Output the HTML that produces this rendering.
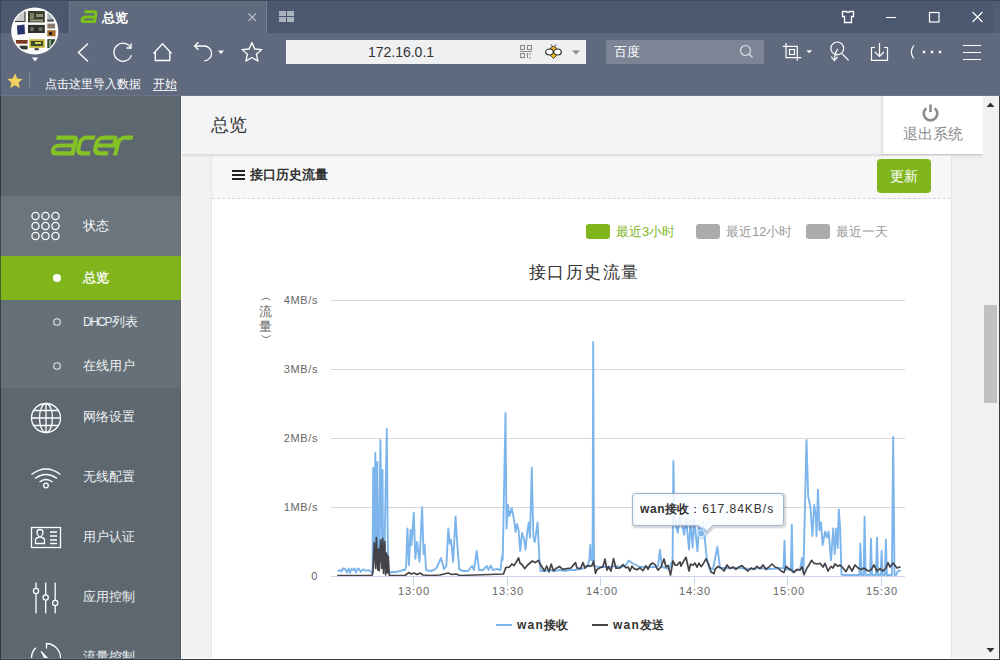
<!DOCTYPE html>
<html><head><meta charset="utf-8">
<style>
*{margin:0;padding:0;box-sizing:border-box}
html,body{width:1000px;height:660px;overflow:hidden;font-family:"Liberation Sans",sans-serif;background:#f2f3f5;position:relative}
.abs{position:absolute}
svg{position:absolute;overflow:visible}
#tabbar{left:0;top:0;width:1000px;height:33px;background:#4c5870;border-top:1px solid #3e4859}
#tab{left:69px;top:1px;width:197px;height:32px;background:#5f6a7e;border-left:1px solid #6e7a8c}
#toolbar{left:0;top:33px;width:1000px;height:62px;background:#5f6a7e}
#addr{left:286px;top:40px;width:300px;height:24px;background:#eef0f2}
#search{left:606px;top:40px;width:158px;height:24px;background:#7b8595}
#bmsep{left:29px;top:73px;width:1px;height:16px;background:#7d8797}
#pagetop{left:0;top:95px;width:1000px;height:1px;background:#6b7587}
#side{left:0;top:96px;width:181px;height:564px;background:#5c6770;border-left:1px solid #525c66}
.mi{position:absolute;left:0;width:181px;color:#eef0f2;font-size:14px}
.sb5{font-weight:500}
.tx{position:absolute;white-space:nowrap}
#main{left:181px;top:96px;width:804px;height:564px;background:#f2f2f2}
#hdr{left:182px;top:96px;width:801px;height:59px;background:#f3f4f6;border-bottom:1px solid #dcdee1}
#logout{left:882px;top:96px;width:101px;height:58px;background:#fff;box-shadow:0 2px 4px rgba(0,0,0,.12);border-left:1px solid #dcdcdc}
#panel{left:211px;top:156px;width:741px;height:504px;background:#fff;border-left:1px solid #e5e5e5;border-right:1px solid #e5e5e5}
#phdr{left:212px;top:156px;width:739px;height:43px;background:#f7f7f7;border-bottom:1px dashed #d8d8d8}
#btn{left:877px;top:159px;width:54px;height:34px;background:#80b51c;border-radius:4px;color:#fff;font-size:14px;font-weight:500;text-align:center;line-height:34px}
#sb{left:983px;top:96px;width:16px;height:564px;background:#f1f1f1}
#rb{left:999px;top:96px;width:1px;height:564px;background:#363e4a}
#thumb{left:984px;top:305px;width:13px;height:98px;background:#c1c1c1}
#botb{left:0;top:659px;width:1000px;height:1px;background:#363e4a}
</style></head><body>
<div id="tabbar" class="abs"></div>
<div class="abs" style="left:993px;top:1px;width:7px;height:95px;background:rgba(255,255,255,0.03)"></div>
<div id="tab" class="abs"></div>
<div id="toolbar" class="abs"></div>
<div id="addr" class="abs"></div>
<div id="search" class="abs"></div>
<div id="bmsep" class="abs"></div>
<div id="pagetop" class="abs"></div>
<div class="abs" style="left:0;top:0;width:1px;height:96px;background:rgba(40,55,90,0.45)"></div>

<!-- avatar -->
<svg style="left:0;top:0" width="70" height="70" viewBox="0 0 70 70">
  <defs><clipPath id="avc"><circle cx="34.8" cy="31" r="22.3"/></clipPath></defs>
  <circle cx="34.8" cy="31" r="23.6" fill="#fff"/>
  <g clip-path="url(#avc)">
    <rect x="10" y="7" width="50" height="48" fill="#fbfbfb"/>
    <rect x="14.5" y="11.4" width="11" height="10.2" fill="#c9cbcc"/>
    <path d="M25 11.5V21.5H14.5" stroke="#333" stroke-width="1" fill="none"/>
    <rect x="28" y="11" width="16.8" height="11.4" fill="#3a4030"/>
    <rect x="30" y="13" width="4" height="6" fill="#7a8060"/>
    <rect x="36" y="14" width="7" height="3" fill="#8a9070"/>
    <rect x="30" y="19.5" width="13" height="2" fill="#9a9a80"/>
    <rect x="47.3" y="12.2" width="6.5" height="9.4" fill="#aeb4ba"/>
    <rect x="47.3" y="19.5" width="6.5" height="2.1" fill="#505050"/>
    <path d="M17 25.5L24.5 24.5L25 34L17.5 34.8Z" fill="#25356c"/>
    <rect x="28" y="24.9" width="16.8" height="8.1" fill="#2e2e2c"/>
    <circle cx="32" cy="29" r="2.2" fill="#6a6a64"/><circle cx="40.5" cy="29" r="2.2" fill="#6a6a64"/>
    <rect x="47.3" y="23.6" width="7.7" height="4.9" fill="#8a7a70"/>
    <rect x="47.3" y="30.2" width="8.2" height="6.1" fill="#a46a2c"/>
    <rect x="49" y="32" width="3" height="3" fill="#2a2018"/>
    <rect x="15.8" y="40" width="11.8" height="3.7" fill="#7a3a22"/>
    <rect x="19.5" y="45.7" width="8.1" height="3.7" fill="#2e3a30"/>
    <rect x="29.3" y="39.2" width="15.5" height="8.6" fill="#c8b83a"/>
    <rect x="31" y="41" width="12" height="5" fill="#3a4a30"/>
    <rect x="35" y="42" width="6" height="2" fill="#d8d050"/>
    <rect x="34.6" y="48.2" width="4.1" height="2" fill="#333"/>
    <rect x="47.3" y="39.2" width="7.7" height="9" fill="#2c4a2e"/>
    <rect x="49" y="40" width="2" height="7" fill="#8aa080"/>
  </g>
  <path d="M32 57.5h6l-3 4z" fill="#fff"/>
</svg>
<!-- tab content -->
<svg style="left:79px;top:10px" width="20" height="15" viewBox="0 0 20 15"><g transform="scale(0.64) translate(1.5,0.5) translate(0,20) skewX(-10) translate(0,-20)" fill="none" stroke="#7cc21a" stroke-width="4.6"><path d="M4 2.3H19Q22.3 2.3 22.3 6V20"/><path d="M22.3 10.3H8Q2.3 10.3 2.3 14.2Q2.3 17.7 7 17.7H22.3"/></g></svg>
<div class="tx" style="left:102px;top:10px;font-size:13px;font-weight:bold;color:#fff;line-height:15px">总览</div>
<svg style="left:248px;top:13px" width="9" height="9"><path d="M0.5 0.5L8 8M8 0.5L0.5 8" stroke="#bcc2cb" stroke-width="1.1"/></svg>
<div class="abs" style="left:266px;top:1px;width:1px;height:32px;background:#76818f"></div>
<svg style="left:279px;top:11px" width="16" height="12"><rect x="0" y="0" width="7" height="5" fill="#aab2be"/><rect x="8" y="0" width="7" height="5" fill="#aab2be"/><rect x="0" y="6" width="7" height="5" fill="#aab2be"/><rect x="8" y="6" width="7" height="5" fill="#aab2be"/></svg>
<!-- window controls -->
<svg style="left:836px;top:6px" width="150" height="24" fill="none" stroke="#fff" stroke-width="1.2">
  <path d="M6.5 5.5H10.5Q12 7 13.5 5.5H17.5V10.5H15.5V16.5H8.5V10.5H6.5Z" stroke-width="1.3"/>
  <path d="M50 11.5h10" stroke-width="1.1"/>
  <rect x="93.5" y="6.5" width="9.5" height="9.5"/>
  <path d="M136.5 6l10 10M146.5 6l-10 10" stroke-width="1.1"/>
</svg>
<!-- nav icons -->
<svg style="left:70px;top:32px" width="200" height="40" fill="none" stroke="#fff" stroke-width="1.4">
  <path d="M18 11.5L8.5 20.5L18 29.5"/>
  <path d="M61.5 23.1A9 9 0 1 1 60.8 15.8" stroke-width="1.3"/>
  <path d="M56.5 16H61V11.3" stroke-width="1.3"/>
  <path d="M83.5 21.5L92.5 11.8L101.5 21.5M85.3 19.8V28.5H99.8V19.8" stroke-width="1.3"/>
  <path d="M124.8 14H134.2A7.4 7.4 0 0 1 134.2 28.8" stroke-width="1.3"/>
  <path d="M128.4 10.2L124.6 14L128.4 17.8" stroke-width="1.3"/>
  <path d="M148 18.5h6l-3 3.5z" fill="#fff" stroke="none"/>
  <path d="M181.90 10.50L184.66 17.00L191.70 17.62L186.37 22.25L187.95 29.13L181.90 25.50L175.85 29.13L177.43 22.25L172.10 17.62L179.14 17.00Z" stroke-width="1.3" stroke-linejoin="round"/>
</svg>
<div class="tx" style="left:286px;top:43px;width:230px;text-align:center;font-size:14px;color:#333;line-height:18px">172.16.0.1</div>
<svg style="left:518px;top:44px" width="70" height="16" fill="none">
  <g stroke="#8a8a8a" stroke-width="1.1">
    <rect x="2.5" y="1.5" width="4" height="4"/><rect x="9.5" y="1.5" width="4" height="4"/><rect x="2.5" y="9.5" width="4" height="4"/>
    <path d="M2 7.5h12M9.5 9v5M12 9v2M12 13v1.5"/>
  </g>
  <g transform="translate(27,0)">
    <path d="M7.5 2.5L6 0.5M9.5 2.5L11 0.5" stroke="#2a2a2a" stroke-width="1"/>
    <ellipse cx="8.5" cy="5" rx="3" ry="2.5" fill="#f2b51e" stroke="#2a2a2a" stroke-width="0.8"/>
    <ellipse cx="4.5" cy="8" rx="3.8" ry="3" fill="#fff" stroke="#2a2a2a" stroke-width="1.2"/>
    <ellipse cx="12.5" cy="8" rx="3.8" ry="3" fill="#fff" stroke="#2a2a2a" stroke-width="1.2"/>
    <path d="M5.5 11.5l3 3 3-3-3-2.5z" fill="#f2b51e" stroke="#2a2a2a" stroke-width="0.8"/>
  </g>
  <path d="M54 6.5h8l-4 4z" fill="#888"/>
</svg>
<div class="tx" style="left:614px;top:44px;font-size:13px;color:#fff;line-height:16px">百度</div>
<svg style="left:736px;top:42px" width="20" height="20" fill="none" stroke="#d8dce2" stroke-width="1.2"><circle cx="9.5" cy="8.5" r="5"/><path d="M13 12l3.5 3.5"/></svg>
<svg style="left:775px;top:35px" width="225" height="35" fill="none" stroke="#fff" stroke-width="1.3">
  <path d="M11 8V22.6H26.3M7.8 11.4H22.3V25.8" stroke-width="1.2"/>
  <rect x="14.5" y="14.5" width="5" height="5" stroke-width="1.2"/>
  <path d="M31.4 15.3h5.6l-2.8 3z" fill="#fff" stroke="none"/>
  <circle cx="62.3" cy="13.4" r="6.4" stroke-width="1.2"/>
  <path d="M67 18.6L73.6 25.4" stroke-width="1.3"/>
  <path d="M62.8 13.8Q59.8 18 59.4 25.3M56.2 21.6L59.4 25.6L62.6 21.8" stroke-width="1.2"/>
  <path d="M100 12.5h-3.5v12.8h16v-12.8h-3.5" stroke-width="1.2"/>
  <path d="M104.5 8v13.5M100 17l4.5 4.5 4.5-4.5" stroke-width="1.2"/>
  <path d="M138.8 10.5Q134 17 138.8 23.5" stroke-width="1.2"/>
  <rect x="147.8" y="15.8" width="2.4" height="2.4" fill="#fff" stroke="none"/>
  <rect x="155.8" y="15.8" width="2.4" height="2.4" fill="#fff" stroke="none"/>
  <rect x="163.8" y="15.8" width="2.4" height="2.4" fill="#fff" stroke="none"/>
  <path d="M188 10.5h18M188 17.5h18M188 24.5h18" stroke-width="1.2"/>
</svg>
<!-- bookmarks bar -->
<svg style="left:6px;top:72px" width="18" height="18"><path d="M9 1.5l2.3 5 5.4.5-4.1 3.6 1.2 5.4L9 13.2 4.2 16l1.2-5.4L1.3 7l5.4-.5z" fill="#f4d060"/></svg>
<div class="tx" style="left:45px;top:76px;font-size:12px;color:#fff;line-height:16px">点击这里导入数据</div>
<div class="tx" style="left:153px;top:76px;font-size:12px;color:#fff;line-height:16px">开始</div><div class="abs" style="left:153px;top:90px;width:24px;height:1px;background:#e8eaee"></div>

<div id="side" class="abs"></div>
<div class="mi" style="top:196px;height:60px;background:#6a757d"></div>
<div class="mi" style="top:256px;height:44px;background:#80b51c"></div>
<div class="mi" style="top:300px;height:88px;background:#657078"></div>
<svg style="left:49px;top:135px" width="90" height="22" viewBox="0 0 90 22"><g transform="translate(0.5,0.5) translate(0,20) skewX(-14) translate(0,-20)" fill="none" stroke="#84c226" stroke-width="4.2">
<path d="M2.5 2.1H19Q22.5 2.1 22.5 5.5V20"/>
<path d="M22.5 10H7.5Q2.1 10 2.1 14Q2.1 17.9 6.5 17.9H22.5"/>
<path d="M41 2.1H33Q27 2.1 27 8.5V11.5Q27 17.9 33 17.9H40"/>
<path d="M60 2.1H50Q44 2.1 44 8.5V11.5Q44 17.9 50 17.9H58"/>
<path d="M44 10H62M60 2.1Q62 2.1 62 5V12"/>
<path d="M65.5 20V8.5Q65.5 2.1 71.5 2.1H79"/>
</g></svg>
<svg style="left:28px;top:208px" width="36" height="36" fill="none" stroke="#fff" stroke-width="1.3">
  <circle cx="7.5" cy="8" r="3.6"/><circle cx="17.5" cy="8" r="3.6"/><circle cx="27.5" cy="8" r="3.6"/>
  <circle cx="7.5" cy="18" r="3.6"/><circle cx="17.5" cy="18" r="3.6"/><circle cx="27.5" cy="18" r="3.6"/>
  <circle cx="7.5" cy="28" r="3.6"/><circle cx="17.5" cy="28" r="3.6"/><circle cx="27.5" cy="28" r="3.6"/>
</svg>
<div class="tx sb5" style="left:83px;top:217px;font-size:13px;color:#fff;line-height:18px">状态</div>
<svg style="left:50px;top:271px" width="14" height="14"><circle cx="7" cy="7" r="4" fill="#fff"/></svg>
<div class="tx sb5" style="left:83px;top:270px;font-size:13px;font-weight:bold;color:#f4f8e8;line-height:16px">总览</div>
<svg style="left:50px;top:315px" width="14" height="14"><circle cx="7" cy="7" r="3.3" fill="none" stroke="#e6e9ec" stroke-width="1.1"/></svg>
<div class="tx sb5" style="left:83px;top:314px;font-size:13px;color:#eef0f2;line-height:16px"><span style="font-size:12px;letter-spacing:-1.5px">DHCP</span><span style="margin-left:1px">列表</span></div>
<svg style="left:50px;top:359px" width="14" height="14"><circle cx="7" cy="7" r="3.3" fill="none" stroke="#e6e9ec" stroke-width="1.1"/></svg>
<div class="tx sb5" style="left:83px;top:358px;font-size:13px;color:#eef0f2;line-height:16px">在线用户</div>
<svg style="left:0;top:390px" width="181" height="270" fill="none" stroke="#fff" stroke-width="1.3">
  <circle cx="46" cy="28" r="14.5"/>
  <ellipse cx="46" cy="28" rx="6.5" ry="14.5"/>
  <path d="M46 13.5v29M33 20.5h26M31.5 28h29M33 35.5h26"/>
  <path d="M31.5 84.5q14.5-11 29 0M35 88.5q11-8 22 0M39.5 92q6.5-5 13 0"/>
  <circle cx="46" cy="95.5" r="2.3"/>
  <rect x="31.5" y="137.5" width="29" height="20"/>
  <path d="M35.5 153.5v-3.5q0-2 4-3q-2.5-1.5-2.5-4.5a3 3 0 0 1 6 0q0 3-2.5 4.5q4 1 4 3v3.5z"/>
  <path d="M50 142h7M50 146h7M50 150h7M50 153.5h7"/>
  <path d="M36 192.5v31M45.7 192.5v31M55.2 192.5v31"/>
  <circle cx="36" cy="201" r="2.6" fill="#5c6770"/><circle cx="45.7" cy="207.5" r="2.6" fill="#5c6770"/><circle cx="55.2" cy="213" r="2.6" fill="#5c6770"/>
  <path d="M31.5 268A14.5 14.5 0 0 1 35.8 257.8"/>
  <path d="M46.5 258.5V253.5A14.5 14.5 0 0 1 60.5 268"/>
  <path d="M41 261L47.5 268L44.5 268Z" fill="#fff" stroke-width="1"/>
</svg>
<div class="tx sb5" style="left:83px;top:408px;font-size:13px;color:#eef0f2;line-height:18px">网络设置</div>
<div class="tx sb5" style="left:83px;top:468px;font-size:13px;color:#eef0f2;line-height:18px">无线配置</div>
<div class="tx sb5" style="left:83px;top:528px;font-size:13px;color:#eef0f2;line-height:18px">用户认证</div>
<div class="tx sb5" style="left:83px;top:588px;font-size:13px;color:#eef0f2;line-height:18px">应用控制</div>
<div class="tx sb5" style="left:83px;top:648px;font-size:13px;color:#eef0f2;line-height:18px">流量控制</div>

<div class="abs" style="left:0;top:96px;width:1px;height:564px;background:rgba(20,30,40,0.55);z-index:5"></div>
<div id="main" class="abs"></div>
<div class="abs" style="left:180px;top:96px;width:1px;height:564px;background:rgba(0,0,0,0.08)"></div>
<div class="abs" style="left:181px;top:96px;width:1px;height:564px;background:#fff"></div>
<div id="hdr" class="abs"></div>
<div class="tx" style="left:211px;top:114px;font-size:18px;color:#333;line-height:22px">总览</div>
<div id="logout" class="abs"></div>
<svg style="left:920px;top:102px" width="22" height="22" fill="none" stroke="#8c8c8c" stroke-width="2.6"><path d="M6.3 6.2A6.8 6.8 0 1 0 14.7 6.2"/><path d="M10.5 2.5v7.5"/></svg>
<div class="tx" style="left:903px;top:125px;font-size:15px;color:#8c8c8c;line-height:18px">退出系统</div>
<div id="panel" class="abs"></div>
<div id="phdr" class="abs"></div>
<svg style="left:232px;top:169px" width="13" height="12"><path d="M0 2h13M0 6h13M0 10h13" stroke="#222" stroke-width="2"/></svg>
<div class="tx" style="left:250px;top:167px;font-size:13px;font-weight:bold;color:#333;line-height:16px">接口历史流量</div>
<div id="btn" class="abs">更新</div>
<div class="abs" style="left:182px;top:155px;width:701px;height:2px;background:linear-gradient(rgba(0,0,0,0.07),rgba(0,0,0,0.02))"></div>

<!-- CHART -->
<svg style="left:0;top:0" width="1000" height="660" viewBox="0 0 1000 660">
<g stroke="#d8d8d8" stroke-width="1">
<path d="M331 300.5H905M331 369.5H905M331 438.5H905M331 507.5H905"/>
</g>
<path d="M413.5 576v10M507.5 576v10M600.5 576v10M694.5 576v10M787.5 576v10M881.5 576v10" stroke="#ccd6eb" stroke-width="1"/>
<polyline fill="none" stroke="#7cb5ec" stroke-width="1.9" stroke-linejoin="round" stroke-linecap="round" points="338.4,571 340,570 341.5,571.5 343,568.5 345,569 347,572.5 348.5,568.5 350,572.8 351.5,569 353,570 354.5,568.5 356,572.5 357.5,569 359,568.5 360.5,572 362,570 364,569.5 366,571 368,570 370,571 371.5,572 372.5,571 373.2,468 374.2,548 375.3,453 376.3,548 377.3,462 377.9,565 379,550 380.4,440 381.5,548 382.5,470 383.2,568 384.5,548 386.8,429 388,570 389.5,573 392,572 396,572 400,571 403,570 405,570 406.2,566 407.4,528.5 409,565 410.5,530 411.5,545 413.8,512.6 415.3,558.8 417.1,542 419.5,561.8 422.1,507.3 423.6,554 424.7,545 426,570 430,571 434,570 436.5,568 441,558 444,569 446.4,566 448.3,528.5 449.8,543.6 451,540 453.2,561.8 455.5,516.4 457,540 459.2,569.4 463,571 468,571 472,566 474,570 476.7,551 479,570 483,570 486.8,566 488.5,570 490.6,565.6 493,570 497,569 500.5,570 502,556 502.7,560 505.5,413 506.5,528.5 508,505 509.5,516 511.8,508 514,519.4 515.6,532 517,524 518.6,530 520.2,551 522,533 524,539 525.5,549.7 527,534.5 528.8,522.4 530,537.6 531.8,467.6 533.3,536 534.8,542 537.6,522.4 539.4,558.8 540.6,571 545,571 550,570 555,571 560,570 565,571 570,570 575,570 580,569 585,568 588,566 589.5,558 590.3,545 591,560 592.6,560 593.2,342 594,566 600,567 605,567 610,567 615,566 620,567 625,566 628.8,560.6 632,563 636,565 640,567 645,567 650,567 655,567 658,566 660,549.8 662,567 666,568 669,569 672.6,560 673.4,461 674.4,520 677.8,532.7 680,515 684.2,534.7 686,518 689,549.4 690.5,520 692.6,547.5 694,520 697.5,551.4 699,525 701.4,533.5 703,522 706.8,558.3 709,568 713,569 717.4,546.7 720,568 730,568 740,568 750,569 760,568 770,569 783.6,568 784.5,540.6 785.4,569 790.9,570 791.8,524.7 792.7,572 797,570 800,570 802,558 803.5,570 806.5,440 808.2,496.7 810.5,507.3 812.4,536 814.2,505 815.8,516.4 816.5,536 818,489.8 819.5,530 821,522.4 822.6,545 825.2,531.5 827,537.6 828.6,531.5 831,560.3 833.2,528.5 834.7,554 836.2,528.5 837.7,548 838.8,509.5 840,525.5 841.5,574.7 845,575 850,575 855,575 859.4,575 860.4,543.6 861.4,575 863.6,575 864.6,516.6 865.6,575 870,575 871,539 872,575 876,575 877,537.6 878,575 880.6,575 881.6,551 882.6,575 884.9,575 885.9,539.5 886.9,575 891.9,575 893.2,437 894.5,575 896,575 898,571 900,570.8"/>
<polyline fill="none" stroke="#434348" stroke-width="1.7" stroke-linejoin="round" stroke-linecap="round" points="338,575.5 371,575.5 372.2,575 372.9,572 374.3,542.5 375.6,568.3 376.4,537.5 377.7,570 378.5,549 379.3,570.8 380.6,540 381.8,568.3 382.7,538.3 383.5,573.3 384.75,541.7 385.6,575 386.5,553 387.3,573 388.2,556 389.3,575.5 405,575.5 407,574 409,572.5 411,574 414,573 417,574.5 420,573 423,575 430,575.5 440,575 444,574 448,573 452,574.5 456,574 460,575.5 503.5,574 505.8,567.6 509.5,567 511.8,564 514,565.6 516.4,561.8 518.6,558 520,563 522.4,565 524.7,568.6 527.7,565 532.3,561 535.3,562.6 538.3,560.3 539.8,563.3 542,567 544.4,571 546.7,566 549,571.7 551.2,564 553.5,571 555.8,568.6 559.5,566.4 562.6,569.4 567,568.6 571,568 575.5,562.6 577,568 580.5,568.6 583,562.6 585,568 587,565.6 590,566.2 592,565.4 593.5,561 595.5,573.4 597,569.4 600,567.8 603,566.6 605,559 607,570.2 608.5,566.6 611,571 613.5,558.6 616,568.2 620,567.8 623,564.6 626,567.8 628,567 630,571 632,566.2 634,568.6 637,569.8 640,567.8 643,570.6 646,565.8 648,569.4 650,565 652.5,563 655,564.6 658,570.2 661,567 664,559 666,567 668,565.4 670.5,575 673,560.8 675,565.2 677,565.2 680,561.8 681,566.2 683,562.2 686,557.3 689,571 690.5,564.2 693,565.2 695,563.2 697,567.2 699,563.2 701,566.7 703,564.2 706,558.8 709,565.2 711,572.1 714,573.6 715,569.4 718,566.4 721,568 724,571 727,565 730,568.6 733,567 736,569.4 739,567 742,565.6 745,568.6 748,571 751,568 754,569.4 757,566.4 760,568.6 763,565 766,569.4 769,567 772,564 775,567 778,568 781,571 784,572.4 786,566.4 788,568 791,570 794,572.4 797,569.4 800,570 802,567 804,574.7 807,568 809,565 811.5,560.3 814,563.3 818,564 820,563.3 823,567 825,563.3 828,571 831,566.4 833,568 835,564 838,566.4 840,565 843,568 846,571.7 849,565.6 852,571 855,565 858,568 861,569.4 864,568 868,571 871,570 874,565 877,571 880,568.6 883,571 886,568 888,562.6 890,567 893,563 897,568 900,567"/>
<path d="M331 576.5H905" stroke="#ccd6eb" stroke-width="1"/>
</svg>
<!-- CHARTEXTRA -->
<div class="abs" style="left:586px;top:224px;width:24px;height:15px;background:#80b51c;border-radius:3px"></div>
<div class="tx" style="left:616px;top:224px;font-size:13px;color:#80b51c;line-height:16px">最近3小时</div>
<div class="abs" style="left:696px;top:224px;width:24px;height:15px;background:#ababab;border-radius:3px"></div>
<div class="tx" style="left:726px;top:224px;font-size:13px;color:#999;line-height:16px">最近12小时</div>
<div class="abs" style="left:806px;top:224px;width:24px;height:15px;background:#ababab;border-radius:3px"></div>
<div class="tx" style="left:836px;top:224px;font-size:13px;color:#999;line-height:16px">最近一天</div>
<div class="tx" style="left:529px;top:263px;font-size:17px;color:#333;line-height:20px;letter-spacing:1.4px">接口历史流量</div>
<svg style="left:258px;top:295px" width="16" height="46" fill="none" stroke="#777" stroke-width="1"><path d="M3.5 5.2Q8 1 12.5 5.2"/><path d="M3.5 40.5Q8 44.5 12.5 40.5"/></svg>
<div class="tx" style="left:259px;top:304px;font-size:13px;color:#666;line-height:15px">流</div>
<div class="tx" style="left:259px;top:319px;font-size:13px;color:#666;line-height:15px">量</div>
<div class="tx" style="left:251px;width:67px;top:293px;text-align:right;font-size:11px;color:#666;line-height:14px;letter-spacing:0.6px">4MB/s</div>
<div class="tx" style="left:251px;width:67px;top:362px;text-align:right;font-size:11px;color:#666;line-height:14px;letter-spacing:0.6px">3MB/s</div>
<div class="tx" style="left:251px;width:67px;top:431px;text-align:right;font-size:11px;color:#666;line-height:14px;letter-spacing:0.6px">2MB/s</div>
<div class="tx" style="left:251px;width:67px;top:500px;text-align:right;font-size:11px;color:#666;line-height:14px;letter-spacing:0.6px">1MB/s</div>
<div class="tx" style="left:251px;width:67px;top:569px;text-align:right;font-size:11px;color:#666;line-height:14px;letter-spacing:0.6px">0</div>
<div class="tx" style="left:384px;width:60px;top:584px;text-align:center;font-size:11px;color:#666;line-height:14px;letter-spacing:0.9px">13:00</div>
<div class="tx" style="left:478px;width:60px;top:584px;text-align:center;font-size:11px;color:#666;line-height:14px;letter-spacing:0.9px">13:30</div>
<div class="tx" style="left:572px;width:60px;top:584px;text-align:center;font-size:11px;color:#666;line-height:14px;letter-spacing:0.9px">14:00</div>
<div class="tx" style="left:665px;width:60px;top:584px;text-align:center;font-size:11px;color:#666;line-height:14px;letter-spacing:0.9px">14:30</div>
<div class="tx" style="left:759px;width:60px;top:584px;text-align:center;font-size:11px;color:#666;line-height:14px;letter-spacing:0.9px">15:00</div>
<div class="tx" style="left:852px;width:60px;top:584px;text-align:center;font-size:11px;color:#666;line-height:14px;letter-spacing:0.9px">15:30</div>
<div class="abs" style="left:496px;top:624px;width:16px;height:2px;background:#7cb5ec"></div>
<div class="tx" style="left:517px;top:618px;font-size:12px;font-weight:bold;color:#333;line-height:14px"><span style="letter-spacing:1.2px">wan</span>接收</div>
<div class="abs" style="left:592px;top:624px;width:16px;height:2px;background:#434348"></div>
<div class="tx" style="left:613px;top:618px;font-size:12px;font-weight:bold;color:#333;line-height:14px"><span style="letter-spacing:1.2px">wan</span>发送</div>
<svg style="left:0;top:0" width="1000" height="660"><g fill="none" transform="translate(1,1)"><path d="M635.5 493.5H780.5Q783.5 493.5 783.5 496.5V522.5Q783.5 525.5 780.5 525.5H712.5L706.5 531.5L697.5 525.5H635.5Q632.5 525.5 632.5 522.5V496.5Q632.5 493.5 635.5 493.5Z" stroke="rgba(0,0,0,0.05)" stroke-width="5"/><path d="M635.5 493.5H780.5Q783.5 493.5 783.5 496.5V522.5Q783.5 525.5 780.5 525.5H712.5L706.5 531.5L697.5 525.5H635.5Q632.5 525.5 632.5 522.5V496.5Q632.5 493.5 635.5 493.5Z" stroke="rgba(0,0,0,0.1)" stroke-width="3"/></g><path d="M635.5 493.5H780.5Q783.5 493.5 783.5 496.5V522.5Q783.5 525.5 780.5 525.5H712.5L706.5 531.5L697.5 525.5H635.5Q632.5 525.5 632.5 522.5V496.5Q632.5 493.5 635.5 493.5Z" fill="rgba(252,253,255,0.86)" stroke="#9db4d4" stroke-width="1"/></svg>
<div class="tx" style="left:640px;top:502px;font-size:12px;color:#333;line-height:15px"><b><span style="letter-spacing:0.6px">wan</span>接收</b><span style="letter-spacing:1px">：617.84KB/s</span></div>
<svg style="left:690px;top:522px" width="24" height="24"><circle cx="11.2" cy="11.3" r="5" fill="none" stroke="rgba(124,181,236,0.3)" stroke-width="3"/><circle cx="11.2" cy="11.3" r="3.5" fill="#7cb5ec" stroke="#fff" stroke-width="0.8"/></svg>
<!-- /CHART -->

<div id="sb" class="abs"></div>
<div id="thumb" class="abs"></div>
<svg style="left:983px;top:100px" width="14" height="10"><path d="M3.5 7h8l-4-4.5z" fill="#333"/></svg>
<svg style="left:983px;top:646px" width="14" height="10"><path d="M3.5 2h8l-4 4.5z" fill="#333"/></svg>
<div id="rb" class="abs"></div>
<div class="abs" style="left:0;top:658px;width:181px;height:1px;background:#67727b"></div>
<div class="abs" style="left:181px;top:658px;width:818px;height:1px;background:#fafafa"></div>
<div id="botb" class="abs"></div>
</body></html>
